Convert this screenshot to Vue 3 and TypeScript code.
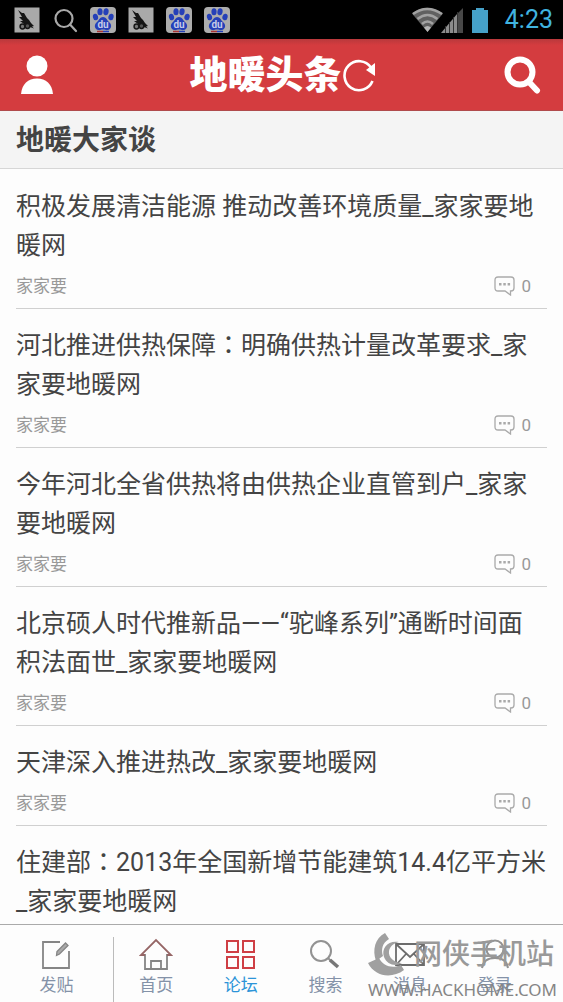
<script setup lang="ts">
interface Topic {
  title: string
  author?: string
  replies?: number
}

const topics: Topic[] = [
  { title: '积极发展清洁能源 推动改善环境质量_家家要地暖网', author: '家家要', replies: 0 },
  { title: '河北推进供热保障：明确供热计量改革要求_家家要地暖网', author: '家家要', replies: 0 },
  { title: '今年河北全省供热将由供热企业直管到户_家家要地暖网', author: '家家要', replies: 0 },
  { title: '北京硕人时代推新品——“驼峰系列”通断时间面积法面世_家家要地暖网', author: '家家要', replies: 0 },
  { title: '天津深入推进热改_家家要地暖网', author: '家家要', replies: 0 },
  { title: '住建部：2013年全国新增节能建筑14.4亿平方米_家家要地暖网' },
]

// Full-width colons are split out so that they can be set centred in their cell.
const parts = (title: string): string[] => title.split(/(：)/)

const notices: string[] = ['bird', 'search', 'paw', 'bird', 'paw', 'paw']
</script>

<template>
  <div class="app">
    <div class="status">
      <div class="notices">
        <svg v-for="(n, i) in notices" :key="i" width="28" height="28" viewBox="0 0 28 28" aria-hidden="true">
          <g v-if="n === 'bird'">
            <rect x="1.500" y="1.500" width="25" height="25" fill="#a9a9a9" />
            <path d="M5 4L9 7L11 7L14 12L16 14L18 17L21 20L19 20.500L21 22.500L17 21L15 18L11 18L7 15L10 15L6 11L9 11Z" fill="#161616" />
            <circle cx="9.500" cy="20.500" r="2.400" fill="#777" stroke="#161616" stroke-width="1.500" />
            <circle cx="14.500" cy="20" r="2.400" fill="#555" stroke="#161616" stroke-width="1.500" />
          </g>
          <g v-else-if="n === 'search'" fill="none" stroke="#a9a9a9" stroke-width="2.200">
            <circle cx="13" cy="12.500" r="8.500" />
            <path d="M19 18.500L25 25" stroke-linecap="round" />
          </g>
          <g v-else>
            <rect x="1" y="1" width="26" height="26" rx="4" fill="#adadad" />
            <g fill="#2540b8">
              <ellipse cx="6.500" cy="11" rx="2.600" ry="3.300" transform="rotate(-12 6.500 11)" />
              <ellipse cx="11" cy="5.800" rx="2.600" ry="3.500" />
              <ellipse cx="17" cy="5.800" rx="2.600" ry="3.500" transform="rotate(10 17 5.800)" />
              <ellipse cx="22" cy="11" rx="2.600" ry="3.300" transform="rotate(14 22 11)" />
              <path d="M14 11C17 11 18 14 20 16C23 18 23 23 19 24C17 24.500 16 23.500 14 23.500C12 23.500 11 24.500 9 24C5 23 5 18 8 16C10 14 11 11 14 11Z" />
            </g>
            <text x="14" y="22" text-anchor="middle" class="du">du</text>
            <path d="M8 25.500H14" stroke="#a33" stroke-width="1.500" />
            <path d="M14 25.500H20" stroke="#2540b8" stroke-width="1.500" />
          </g>
        </svg>
      </div>
      <div class="system">
        <svg width="80" height="28" viewBox="0 0 80 28" aria-hidden="true">
          <path d="M1 7.500Q16 -4 32 7.500L16.500 26Z" fill="#606060" />
          <g fill="none" stroke="#a2a2a2" stroke-width="2.600">
            <path d="M2 8Q16 -2 31 8" />
            <path d="M6.500 13Q16.500 5 26.500 13" />
            <path d="M11 18Q16.500 13 22 18" />
          </g>
          <path d="M13 21.500Q16.500 18.500 20 21.500L16.500 26Z" fill="#b5b5b5" />
          <path d="M30 27L46 8V27Z" fill="#8c8c8c" />
          <path d="M46 8L52 2V27H46Z" fill="#484848" />
          <path d="M34.500 27V20M38.500 27V16M42.500 27V11M46.500 27V6" stroke="#333" />
          <path d="M61 4H65V2H73V4H77V27H61Z" fill="#45a0c8" />
        </svg>
        <time class="clock">4:23</time>
      </div>
    </div>

    <header class="bar">
      <button type="button" class="icon-btn" aria-label="个人中心">
        <svg width="34" height="40" viewBox="0 0 34 40" fill="#fff">
          <circle cx="17" cy="11" r="10.500" />
          <path d="M1 39C2 29 8 23.500 17 23.500S32 29 33 39Z" />
        </svg>
      </button>
      <h1 class="brand">
        <span>地暖头条</span>
        <svg width="34" height="34" viewBox="0 0 34 34" aria-hidden="true">
          <path d="M29 9.500A14.500 14.500 0 1 0 30.500 23" fill="none" stroke="#fff" stroke-width="2.600" />
          <path d="M33 5V18L24 12Z" fill="#fff" />
        </svg>
      </h1>
      <button type="button" class="icon-btn" aria-label="搜索">
        <svg width="38" height="40" viewBox="0 0 38 40" fill="none" stroke="#fff">
          <circle cx="17" cy="17" r="12.500" stroke-width="6" />
          <path d="M26 27L34 35.500" stroke-width="6" stroke-linecap="round" />
        </svg>
      </button>
    </header>

    <main class="content">
      <h2 class="section">地暖大家谈</h2>
      <ul class="topics">
        <li v-for="t in topics" :key="t.title" class="topic">
          <a href="#" class="title"><span v-for="(p, i) in parts(t.title)" :key="i" :class="{ colon: p === '：' }">{{ p }}</span></a>
          <div v-if="t.author" class="meta">
            <span>{{ t.author }}</span>
            <span class="replies">
              <svg width="22" height="20" viewBox="0 0 22 20" aria-hidden="true">
                <path d="M4 1H17Q20 1 20 4V12Q20 15 17 15H16.500V19L11 15H4Q1 15 1 12V4Q1 1 4 1Z" fill="none" stroke="#aaa" stroke-width="1.300" />
                <path d="M5 7H7.500V9.500H5ZM9.300 7H11.800V9.500H9.300ZM13.600 7H16.100V9.500H13.600Z" fill="#aaa" />
              </svg>
              {{ t.replies }}
            </span>
          </div>
        </li>
      </ul>
    </main>

    <nav class="tabs">
      <a href="#" class="tab compose">
        <svg width="34" height="34" viewBox="0 0 34 34" fill="none" stroke="#858585" stroke-width="1.800">
          <path d="M21 5H4V31H30V14" />
          <path d="M17.500 18.500L18 14.500L26.500 6L29 8.500L20.500 17Z" fill="#aaa" stroke-width="1.300" />
        </svg>
        <span>发贴</span>
      </a>
      <a href="#" class="tab">
        <svg width="34" height="34" viewBox="0 0 34 34" fill="none" stroke="#858585" stroke-width="1.800">
          <path d="M6 17V32H28V17M12 32V24H22V32" />
          <path d="M6 18H2L17 3L32 18H28" stroke="#956565" />
        </svg>
        <span>首页</span>
      </a>
      <a href="#" class="tab active">
        <svg width="34" height="34" viewBox="0 0 34 34" fill="none" stroke="#cf3f45" stroke-width="2">
          <path d="M3 4H14V15H3ZM19 4H30V15H19ZM3 20H14V31H3ZM19 20H30V31H19Z" />
        </svg>
        <span>论坛</span>
      </a>
      <a href="#" class="tab">
        <svg width="34" height="34" viewBox="0 0 34 34" fill="none" stroke="#929292">
          <circle cx="13" cy="14" r="10" stroke-width="2" />
          <path d="M20 21L23 24" stroke-width="2" />
          <path d="M22 23L30 30" stroke="#777" stroke-width="3.500" />
        </svg>
        <span>搜索</span>
      </a>
      <a href="#" class="tab">
        <svg width="34" height="34" viewBox="0 0 34 34" fill="none" stroke="#6c6c6c" stroke-width="1.800">
          <path d="M3 7H31V28H3ZM3 7L17 20L31 7M3 28L13 17M31 28L21 17" />
        </svg>
        <span>消息</span>
      </a>
      <a href="#" class="tab">
        <svg width="34" height="34" viewBox="0 0 34 34" fill="none" stroke="#929292" stroke-width="2">
          <circle cx="17" cy="12" r="8.500" />
          <path d="M4 31C5 24 10 21 17 21S29 24 30 31" />
        </svg>
        <span>登录</span>
      </a>
      <div class="watermark">
        <div class="mark-top">
          <svg width="46" height="46" viewBox="0 0 46 46" aria-hidden="true">
            <g fill="#a0a0a0">
              <path d="M17 1L21 7C14 11 13 18 15 24L8 29C4 18 7 6 17 1Z" />
              <path d="M0 31L11 26C15 34 24 37 33 33L36 38C24 47 7 45 0 31Z" />
              <path d="M31 10C20 8 13 16 16 25C19 33 28 35 34 31C26 31 20 25 21 19C22 14 26 11 31 10Z" />
            </g>
          </svg>
          <span>网侠手机站</span>
        </div>
        <div class="mark-url">WWW.HACKHOME.COM</div>
      </div>
    </nav>
  </div>
</template>

<style>
body {
  margin: 0;
  background: #fdfdfd;
}
</style>

<style scoped>
.app {
  display: flex;
  flex-direction: column;
  height: 100vh;
  overflow: hidden;
  color: #444;
  font-family: Roboto, "Noto Sans CJK SC", sans-serif;
}
.status {
  display: flex;
  flex: none;
  align-items: center;
  justify-content: space-between;
  height: 39px;
  padding: 0 10px 0 13px;
  background: #000;
}
.notices {
  display: flex;
  gap: 10px;
}
.du {
  fill: #c4cbe8;
  font-size: 10px;
  font-weight: 700;
}
.system {
  display: flex;
  align-items: center;
  gap: 14px;
}
.clock {
  color: #40b4e0;
  font-size: 25px;
  line-height: 39px;
}
.bar {
  display: flex;
  flex: none;
  align-items: center;
  justify-content: space-between;
  box-sizing: border-box;
  height: 72px;
  padding: 0 22px 0 20px;
  background: linear-gradient(#b9393c, #d43c3f 6px);
  border-bottom: 1px solid #b04a4c;
}
.icon-btn {
  display: flex;
  padding: 0;
  border: 0;
  background: none;
}
.brand {
  display: flex;
  align-items: center;
  margin: 0;
  padding-left: 8px;
  color: #fff;
  font-size: 38px;
  font-weight: 900;
  line-height: 56px;
}
.content {
  flex: 1;
  min-height: 0;
  overflow: hidden;
}
.section {
  margin: 0;
  padding: 2px 16px 0;
  background: #f4f4f4;
  border-bottom: 1px solid #d6d6d6;
  font-size: 28px;
  font-weight: 700;
  line-height: 55px;
}
.topics {
  margin: 0;
  padding: 0 16px;
  list-style: none;
}
.topic {
  padding: 17px 0 9px;
  border-bottom: 1px solid #d0d0d0;
}
.topic:first-child {
  padding-top: 18px;
}
.topic:last-child {
  border-bottom: 0;
}
.title {
  display: block;
  color: #444;
  font-size: 25px;
  line-height: 39px;
  text-decoration: none;
}
.colon {
  font-family: "Noto Sans CJK TC", sans-serif;
  line-height: 1;
}
.meta {
  display: flex;
  justify-content: space-between;
  padding: 8px 16px 0 0;
  color: #999;
  font-size: 17px;
  line-height: 26px;
}
.replies {
  display: flex;
  align-items: center;
  gap: 5px;
}
.tabs {
  position: relative;
  display: flex;
  flex: none;
  height: 77px;
  padding-right: 26px;
  background: #fdfdfd;
  border-top: 1px solid #aaa;
}
.tab {
  display: flex;
  flex: 3;
  flex-direction: column;
  align-items: center;
  padding-top: 12px;
  color: #8492a8;
  font-size: 17px;
  line-height: 28px;
  text-decoration: none;
}
.compose {
  flex: 4;
  margin-top: 12px;
  padding-top: 0;
  border-right: 1px solid #bbb;
}
.active {
  color: #2c94d8;
}
.watermark {
  position: absolute;
  right: 6px;
  bottom: 0;
  color: #858585;
}
.mark-top {
  display: flex;
  align-items: center;
  color: #999;
  font-size: 28px;
  font-weight: 500;
  line-height: 40px;
}
.mark-url {
  font-family: "Noto Sans", sans-serif;
  font-size: 17px;
  line-height: 24px;
}
</style>
